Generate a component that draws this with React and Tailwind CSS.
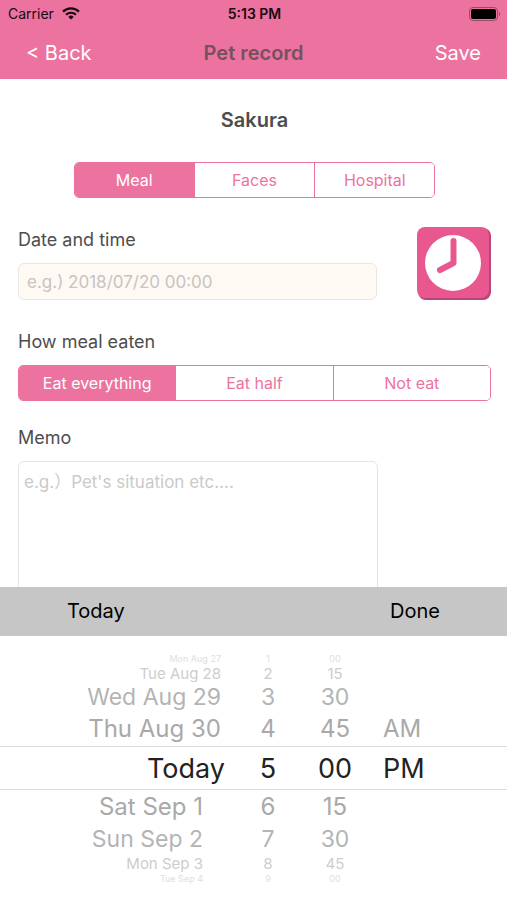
import { useState } from "react";
import clsx from "clsx";

const RECORD_TYPES = ["Meal", "Faces", "Hospital"];
const MEAL_OPTIONS = ["Eat everything", "Eat half", "Not eat"];

// rows of the date wheel, size fades away from the selected one
const WHEEL_ROWS = [
  { date: "Mon Aug 27", hour: "1", minute: "00", size: "h-3 text-[9px] text-[#dedede]" },
  { date: "Tue Aug 28", hour: "2", minute: "15", size: "h-[18px] text-[15px] text-[#cdcdcd]" },
  { date: "Wed Aug 29", hour: "3", minute: "30", size: "h-[30px] text-[23px] text-[#b4b4b4]" },
  { date: "Thu Aug 30", hour: "4", minute: "45", period: "AM", size: "h-[34px] text-[24px] text-[#a9a9a9]" },
  { date: "Today", hour: "5", minute: "00", period: "PM", selected: true },
  { date: "Sat Sep 1", hour: "6", minute: "15", short: true, size: "h-[34px] text-[24px] text-[#a9a9a9]" },
  { date: "Sun Sep 2", hour: "7", minute: "30", short: true, size: "h-[30px] text-[23px] text-[#b4b4b4]" },
  { date: "Mon Sep 3", hour: "8", minute: "45", short: true, size: "h-[18px] text-[15px] text-[#cdcdcd]" },
  { date: "Tue Sep 4", hour: "9", minute: "00", short: true, size: "h-3 text-[9px] text-[#dedede]" },
];

const WifiIcon = () => (
  <svg viewBox="0 0 18 13" className="w-[18px] h-[13px]" fill="none" stroke="#1a0a10" strokeWidth="2.2" aria-hidden="true">
    <path d="M1 4.6a11.4 11.4 0 0 1 16 0" />
    <path d="M4 7.8a7.1 7.1 0 0 1 10 0" />
    <path d="M9 12.6 6.3 9.9a3.8 3.8 0 0 1 5.4 0z" fill="#1a0a10" stroke="none" />
  </svg>
);

const BatteryIcon = () => (
  <svg viewBox="0 0 32 14" className="w-8 h-3.5" aria-hidden="true">
    <rect x="0.5" y="0.5" width="28" height="13" rx="3.5" fill="none" stroke="#9c4a6b" />
    <rect x="2" y="2" width="25" height="10" rx="2" fill="#000" />
    <path d="M30 5v4a2.2 2.2 0 0 0 0-4z" fill="#9c4a6b" />
  </svg>
);

const ClockIcon = () => (
  <svg viewBox="0 0 74 74" className="w-full h-full" aria-hidden="true">
    <rect x="1" y="2" width="73" height="72" rx="8" fill="#b8457a" />
    <rect x="0" y="1" width="72" height="71" rx="8" fill="#e8588f" />
    <circle cx="36" cy="37" r="28" fill="#fff" />
    <path d="M36.5 15v22L23 44" fill="none" stroke="#e8588f" strokeWidth="6" strokeLinecap="round" strokeLinejoin="round" />
  </svg>
);

const SegmentedControl = ({ label, options, value, onChange }) => (
  <div role="group" aria-label={label} className="flex h-9 border border-[#ec73a0] rounded-[5px] overflow-hidden">
    {options.map((option, i) => (
      <button
        key={option}
        type="button"
        aria-pressed={value === option}
        onClick={() => onChange(option)}
        className={clsx(
          "flex-1 basis-0 text-[16px]",
          i > 0 && "border-l border-[#ec73a0]",
          value === option ? "bg-[#ec73a0] text-white" : "bg-white text-[#ec73a0]"
        )}
      >
        {option}
      </button>
    ))}
  </div>
);

const WheelRow = ({ row }) => (
  <div
    className={clsx(
      "grid grid-cols-[225fr_86fr_48fr_148fr] items-center leading-none whitespace-nowrap",
      row.selected ? "h-11 text-[27px] text-[#222] border-y border-[#dcdcdc]" : row.size
    )}
  >
    <span className={clsx("text-right", row.short ? "pr-[22px]" : !row.selected && "pr-1")}>{row.date}</span>
    <span className="text-center">{row.hour}</span>
    <span className="text-center">{row.minute}</span>
    <span className="pl-6">{row.period}</span>
  </div>
);

const App = () => {
  const [recordType, setRecordType] = useState("Meal");
  const [meal, setMeal] = useState("Eat everything");
  const [date, setDate] = useState("");
  const [memo, setMemo] = useState("");

  return (
    <div className="bg-white text-[#4d4d4d] font-['Inter','Noto_Sans_CJK_JP',sans-serif]">
      <header className="bg-[#ec73a0]">
        <div className="grid grid-cols-3 items-center h-[27px] pl-2 pr-1.5 text-[14px] text-[#1a0a10]">
          <div className="flex items-center gap-2">
            <span>Carrier</span>
            <WifiIcon />
          </div>
          <span className="text-center font-semibold">5:13 PM</span>
          <div className="flex justify-end">
            <BatteryIcon />
          </div>
        </div>
        <div className="grid grid-cols-3 items-center h-[52px] px-[26px] text-[20px]">
          <button type="button" className="justify-self-start text-white">&lt; Back</button>
          <h1 className="text-center font-semibold text-[#75505f]">Pet record</h1>
          <button type="button" className="justify-self-end text-white">Save</button>
        </div>
      </header>

      <main className="pl-[18px] pr-4 pt-[27px]">
        <h2 className="text-center text-[20px] leading-7 font-semibold">Sakura</h2>

        <div className="w-[76.5%] mx-auto mt-7">
          <SegmentedControl label="Record type" options={RECORD_TYPES} value={recordType} onChange={setRecordType} />
        </div>

        <div className="flex gap-10 mt-7">
          <div className="flex-1">
            <label htmlFor="date" className="block text-[18px] leading-7">Date and time</label>
            <input
              id="date"
              type="text"
              value={date}
              onChange={(e) => setDate(e.target.value)}
              placeholder="e.g.) 2018/07/20 00:00"
              className="block w-full h-[37px] mt-[9px] px-2 text-[17px] bg-[#fff9f3] border border-[#e9e6e3] rounded-md placeholder:text-[#c6c4c4]"
            />
          </div>
          <button type="button" aria-label="Set current time" className="w-[74px] h-[74px]">
            <ClockIcon />
          </button>
        </div>

        <p className="mt-7 text-[18px] leading-7">How meal eaten</p>
        <div className="mt-[9px]">
          <SegmentedControl label="How meal eaten" options={MEAL_OPTIONS} value={meal} onChange={setMeal} />
        </div>

        <label htmlFor="memo" className="block mt-[23px] text-[18px] leading-7">Memo</label>
        <div className="pr-[113px] mt-[9px]">
          <textarea
            id="memo"
            value={memo}
            onChange={(e) => setMemo(e.target.value)}
            placeholder="e.g.）Pet's situation etc...."
            className="block w-full h-44 px-[5px] py-2 text-[17px] leading-6 border border-[#e4e4e4] rounded-md resize-none placeholder:text-[#cacaca]"
          />
        </div>
      </main>

      <section aria-label="Date picker" className="fixed inset-x-0 bottom-0 bg-white">
        <div className="flex justify-between h-[49px] px-[67px] pb-0.5 bg-[#c6c6c6] text-[20px] text-black">
          <button type="button">Today</button>
          <button type="button">Done</button>
        </div>
        <div className="py-4">
          {WHEEL_ROWS.map((row) => (
            <WheelRow key={row.date} row={row} />
          ))}
        </div>
      </section>
    </div>
  );
};

export default App;
